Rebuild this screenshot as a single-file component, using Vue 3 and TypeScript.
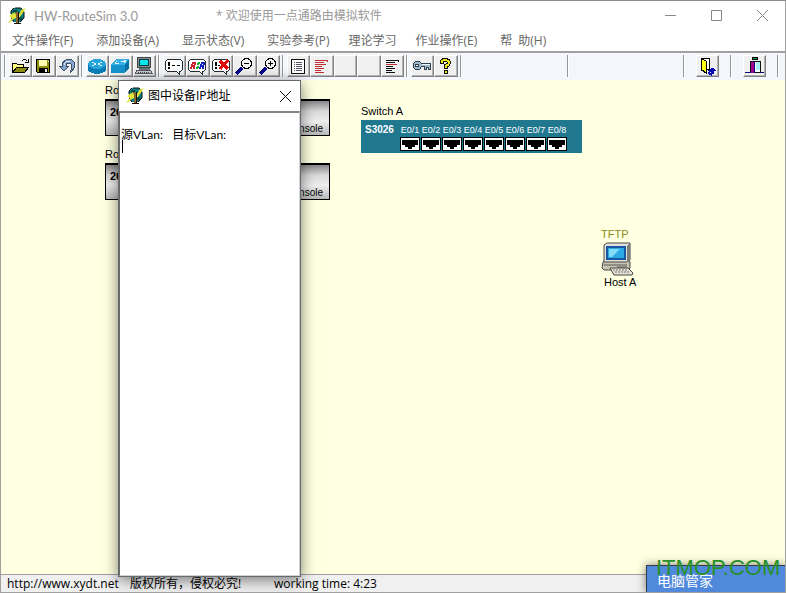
<script setup lang="ts">
import { ref } from 'vue'

interface Tool {
  icon: string
  label: string
}

const menus: string[] = [
  '文件操作(F)',
  '添加设备(A)',
  '显示状态(V)',
  '实验参考(P)',
  '理论学习',
  '作业操作(E)',
  '帮\u2002助(H)',
]

const groups: Tool[][] = [
  [
    { icon: 'open', label: '打开' },
    { icon: 'save', label: '保存' },
    { icon: 'undo', label: '撤销' },
  ],
  [
    { icon: 'router', label: '路由器' },
    { icon: 'switch', label: '交换机' },
    { icon: 'host', label: '主机' },
  ],
  [
    { icon: 'note', label: '标注' },
    { icon: 'note-color', label: '颜色标注' },
    { icon: 'note-delete', label: '删除标注' },
    { icon: 'zoom-out', label: '缩小' },
    { icon: 'zoom-in', label: '放大' },
  ],
  [
    { icon: 'list', label: '列表' },
    { icon: 'lines-red', label: '红色配置' },
    { icon: 'blank', label: '备用一' },
    { icon: 'blank', label: '备用二' },
    { icon: 'lines-black', label: '配置' },
  ],
  [
    { icon: 'key', label: '密码' },
    { icon: 'help', label: '帮助' },
  ],
]

const routers: string[] = ['Router A', 'Router B']
const ports: string[] = ['E0/1', 'E0/2', 'E0/3', 'E0/4', 'E0/5', 'E0/6', 'E0/7', 'E0/8']
const addresses = ref('\n源VLan:   目标VLan:\n')
</script>

<template>
  <div class="window">
    <svg class="sprites" aria-hidden="true">
      <symbol id="icon-globe" viewBox="0 0 18 18">
        <path d="M5 1h8l3 3v7l-3 4H6l-3-4V4z" fill="#0a8080" />
        <path d="M5 3h4v3H5zM11 10h3v3h-3z" fill="#064848" />
        <path d="M6 1L3 4v3M3 11l3 4M12 15l4-4V5l-3-4H7" fill="none" stroke="#111" />
        <path d="M0 16l4-5-3-2 6-4 1 3 4-2 1-3 5-2-4 6-3 4H8l-4 2-1 2z" fill="#e3e33a" />
        <path d="M8 5h2v11H8z" fill="#8a662c" />
        <path d="M10 5h1v11h-1zM6 16h7v1H6z" fill="#181000" />
      </symbol>
      <symbol id="open" viewBox="0 0 20 20">
        <path d="M2.500 16.500V7.500h4l1 1h6v3" fill="#ffff80" stroke="#000" />
        <path d="M2.500 16.500l4-5h12l-4 5z" fill="#8c8c10" stroke="#000" />
        <path d="M11.500 5.500l2-2h2l2 2M18.500 3v3.500H15" fill="none" stroke="#000" />
      </symbol>
      <symbol id="save" viewBox="0 0 20 20">
        <path d="M3.500 3.500h13v13h-12l-1-1z" fill="#909010" stroke="#000" />
        <path d="M6 4h8v6H6z" fill="#ffffb0" />
        <path d="M6 12h9v5H6z" fill="#000" />
        <path d="M12 13h2v3h-2zM15 5h1v1h-1z" fill="#f2f2f2" />
      </symbol>
      <symbol id="undo" viewBox="0 0 20 20">
        <path d="M2 10l5 5 5-5H9q0-3 3-3 5 1 1 10 7-7 4-11-3-4-8-2-4 2-4 6z" fill="#83a5cb" stroke="#3f4f67" />
        <path d="M7 9q1-4 6-4" fill="none" stroke="#dcecff" />
      </symbol>
      <symbol id="router" viewBox="0 0 20 20">
        <path d="M1 8v6c1 5 17 5 18 0V8z" fill="#087bb5" />
        <ellipse cx="10" cy="8" rx="9" ry="5" fill="#2aa5dc" />
        <path d="M5 6l4 2-4 2M15 6l-4 2 4 2" fill="none" stroke="#d9f5ff" />
      </symbol>
      <symbol id="switch" viewBox="0 0 20 20">
        <path d="M1 9l5-6h13l-4 6z" fill="#39b1e4" />
        <path d="M1 9h14v8H1z" fill="#1593cc" />
        <path d="M15 9l4-6v9l-4 5z" fill="#0873a8" />
        <path d="M5 7h4M11 5h5M7 5L5 7M14 4l2 1-2 2" stroke="#e0f8ff" fill="none" />
      </symbol>
      <symbol id="host" viewBox="0 0 20 20">
        <path d="M3.500 1.500h13v10h-13z" fill="#829090" stroke="#404848" />
        <path d="M5.500 3.500h9v6h-9z" fill="#05e6ea" stroke="#063c46" />
        <path d="M5 12h11v2H5z" fill="#687474" />
        <path d="M2.500 14.500h14l2 3h-17z" fill="#c8cccc" stroke="#556" />
        <path d="M4 16.500h12" stroke="#444" stroke-dasharray="1 1" />
      </symbol>
      <symbol id="bubble" viewBox="0 0 20 20">
        <path d="M3.500 3.500h13l2 2v8l-2 2h-1v3l-3-3h-9l-2-2v-8z" fill="#fff" stroke="#222c34" />
      </symbol>
      <symbol id="note" viewBox="0 0 20 20">
        <use href="#bubble" />
        <path d="M4 6h2v4H4zM4 11h2v2H4zM8 9h3v1H8zM13 9h3v1h-3z" fill="#000" />
      </symbol>
      <symbol id="note-color" viewBox="0 0 20 20">
        <use href="#bubble" />
        <path d="M4 13l2-7M7 13l1-7" fill="none" stroke="#d02030" stroke-width="2" />
        <path d="M10 13l1-3M12 6l-1 3" stroke="#10b030" stroke-width="2" />
        <path d="M13 13l2-7M16 13l1-7" stroke="#1525c0" stroke-width="2" />
      </symbol>
      <symbol id="note-delete" viewBox="0 0 20 20">
        <use href="#bubble" />
        <path d="M4 6h2v4H4zM4 11h2v2H4zM7 9h2v1H7z" fill="#000" />
        <path d="M9 5l8 8M17 4l-8 9" stroke="#e00b0b" stroke-width="3" />
      </symbol>
      <symbol id="zoom-out" viewBox="0 0 20 20">
        <path d="M8 12l-6 6" stroke="#08088b" stroke-width="3" />
        <circle cx="12.500" cy="7.500" r="5" fill="#f4f4f4" stroke="#000" />
        <path d="M10 7h5v1h-5z" fill="#000" />
      </symbol>
      <symbol id="zoom-in" viewBox="0 0 20 20">
        <path d="M8 12l-6 6" stroke="#08088b" stroke-width="3" />
        <circle cx="12.500" cy="7.500" r="5" fill="#f4f4f4" stroke="#000" />
        <path d="M10 7h5v1h-5zM12 5h1v5h-1z" fill="#000" />
      </symbol>
      <symbol id="list" viewBox="0 0 20 20">
        <path d="M3 3h14v15H3z" fill="#111" />
        <path d="M4 4h12v13H4z" fill="#fff" />
        <path d="M6 6h1v1H6zM8 6h6v1H8zM6 8h1v1H6zM8 8h6v1H8zM6 10h1v1H6zM8 10h6v1H8zM6 12h1v1H6zM8 12h6v1H8zM6 14h1v1H6zM8 14h6v1H8z" fill="#556" />
      </symbol>
      <symbol id="lines-red" viewBox="0 0 20 20">
        <path d="M4 4h13v2h-1V5H4zM4 6h9v1H4zM4 8h11v1H4zM4 10h7v1H4zM4 12h9v1H4zM4 14h6v1H4zM4 16h9v1H4z" fill="#c22b31" />
      </symbol>
      <symbol id="lines-black" viewBox="0 0 20 20">
        <path d="M4 4h13v2h-1V5H4zM4 6h9v1H4zM4 10h7v1H4zM4 12h9v1H4zM4 14h6v1H4zM4 16h9v1H4z" fill="#111" />
        <path d="M4 8h11v1H4z" fill="#c22b31" />
      </symbol>
      <symbol id="blank" viewBox="0 0 20 20" />
      <symbol id="key" viewBox="0 0 20 20">
        <path d="M1.500 7.500l2-2h4l2 2h9v6h-2v-2h-2v2h-2v-3h-3l-2 3h-4l-2-2z" fill="#9eb9cc" stroke="#34424f" />
        <path d="M3.500 8.500h3v2h-3z" fill="#f0f0f0" stroke="#34424f" />
        <path d="M10 8h8v1h-8z" fill="#eef8ff" />
      </symbol>
      <symbol id="help" viewBox="0 0 20 20">
        <path d="M7 8V6q0-2 3-2t4 2q0 3-3 4v3M11 14v4" fill="none" stroke="#111" stroke-width="4" />
        <path d="M7 7V6q0-2 3-2t4 2q0 3-3 4v2M11 15v2" fill="none" stroke="#f0ea17" stroke-width="2" />
      </symbol>
      <symbol id="door" viewBox="0 0 20 20">
        <path d="M4.500 14.500v-12h8v11h-3" fill="#fff" stroke="#000" />
        <path d="M4.500 2.500l5 3v12l-5-4z" fill="#ffff18" stroke="#000" />
        <path d="M13 17h3v-4M11 17l3-3v5zM13 14h5l-2-2z" fill="#080ab4" stroke="#080ab4" />
      </symbol>
      <symbol id="exit" viewBox="0 0 20 20">
        <path d="M8.500 1.500h5v2h-5z" fill="#14a044" stroke="#000" />
        <path d="M6.500 5.500h10v11h-10z" fill="#fff" stroke="#111" />
        <path d="M7 6h3v11H7z" fill="#a00891" />
        <path d="M12 6h4v8h-4z" fill="#a7f0f4" />
        <path d="M10 5h1v12h-1zM1 16h6v1H1zM16 16h4v1h-4z" fill="#070774" />
      </symbol>
      <symbol id="computer" viewBox="0 0 34 34">
        <path d="M2 20l4-3h20l3 3v6l-2 2H3l-2-2z" fill="#c9c5b5" stroke="#4b4a45" />
        <path d="M3 3l3-2h23v17l-3 2H3z" fill="#e2e0d8" stroke="#484848" />
        <path d="M26 4l3-3v17l-3 2z" fill="#7d7d79" />
        <path d="M6 5h18v12H6z" fill="#2da9e6" stroke="#1659a2" stroke-width="2" />
        <path d="M8 7h11l-8 8H8z" fill="#83dcfa" />
        <path d="M3 23h23M16 25h10" stroke="#595853" />
        <path d="M9 26h18l5 5-1 2H13z" fill="#e6e2d8" stroke="#45443f" />
        <path d="M12 28h15M14 30h15" stroke="#77746c" stroke-dasharray="2 1" />
      </symbol>
    </svg>

    <header class="titlebar">
      <svg class="app-icon"><use href="#icon-globe" /></svg>
      <h1 class="name">HW-RouteSim 3.0</h1>
      <p class="welcome">* 欢迎使用一点通路由模拟软件</p>
      <div class="controls">
        <button class="control" aria-label="最小化">
          <svg viewBox="0 0 11 11"><path d="M0 5.500h11" /></svg>
        </button>
        <button class="control" aria-label="最大化">
          <svg viewBox="0 0 11 11"><path d="M.5.5h10v10H.5z" /></svg>
        </button>
        <button class="control" aria-label="关闭">
          <svg viewBox="0 0 11 11"><path d="M0 0l11 11M11 0L0 11" /></svg>
        </button>
      </div>
    </header>

    <nav class="menubar">
      <button v-for="menu in menus" :key="menu" class="menu">{{ menu }}</button>
    </nav>

    <div class="toolbar" role="toolbar">
      <template v-for="(group, g) in groups" :key="g">
        <span class="separator"></span>
        <div class="group">
          <button v-for="tool in group" :key="tool.label" class="tool" :aria-label="tool.label">
            <svg><use :href="'#' + tool.icon" /></svg>
          </button>
        </div>
      </template>
      <span class="separator"></span>
      <span class="separator middle"></span>
      <div class="exits">
        <span class="separator"></span>
        <button class="tool" aria-label="退出"><svg><use href="#door" /></svg></button>
        <span class="separator"></span>
        <button class="tool" aria-label="关闭程序"><svg><use href="#exit" /></svg></button>
        <span class="separator"></span>
      </div>
    </div>

    <main class="canvas">
      <div v-for="(router, r) in routers" :key="router" class="router" :class="r === 0 ? 'first' : 'second'">
        <div class="device-name">{{ router }}</div>
        <div class="router-body">
          <b class="model">2621</b>
          <span class="console">Console</span>
        </div>
      </div>

      <div class="switch">
        <div class="device-name">Switch A</div>
        <div class="switch-body">
          <b class="switch-model">S3026</b>
          <div class="ports">
            <div v-for="port in ports" :key="port" class="port">
              <span>{{ port }}</span>
              <svg viewBox="0 0 20 14">
                <path d="M0 0h20v14H0z" fill="#000" />
                <path d="M1 1h18v12H1z" fill="#fff" />
                <path d="M2 3h16v5h-3v2h-3v2H8v-2H5V8H2z" fill="#000" />
              </svg>
            </div>
          </div>
        </div>
      </div>

      <div class="host">
        <span class="service">TFTP</span>
        <svg><use href="#computer" /></svg>
        <span class="host-name">Host A</span>
      </div>
    </main>

    <footer class="statusbar">
      <span class="site">http://www.xydt.net</span>
      <span class="rights">版权所有，侵权必究!</span>
      <span class="time">working time: 4:23</span>
    </footer>

    <section class="dialog" role="dialog" aria-labelledby="dialog-title">
      <header class="dialog-head">
        <svg class="app-icon"><use href="#icon-globe" /></svg>
        <h2 id="dialog-title">图中设备IP地址</h2>
        <button class="control close" aria-label="关闭窗口">
          <svg viewBox="0 0 11 11"><path d="M0 0l11 11M11 0L0 11" /></svg>
        </button>
      </header>
      <div class="memo">
        <textarea v-model="addresses" aria-labelledby="dialog-title" spellcheck="false"></textarea>
        <span class="caret"></span>
      </div>
    </section>

    <aside class="popup">
      <span class="popup-title">电脑管家</span>
      <span class="brand">ITMOP.COM</span>
    </aside>
  </div>
</template>

<style>
body {
  margin: 0;
}
</style>

<style scoped>
.window {
  position: relative;
  display: flex;
  flex-direction: column;
  box-sizing: border-box;
  height: 100vh;
  overflow: hidden;
  border: 1px solid #a0a0a0;
  border-top-color: #8b8b8b;
  background: #fff;
  color: #000;
  font: 12px/16px "Open Sans", "Noto Sans CJK SC", sans-serif;
}

.sprites {
  position: absolute;
  width: 0;
  height: 0;
}

button {
  margin: 0;
  padding: 0;
  border: 0;
  background: none;
  color: inherit;
  font: inherit;
}

h1,
h2,
p {
  margin: 0;
  font: inherit;
}

.titlebar {
  display: flex;
  align-items: center;
  height: 29px;
  padding-left: 7px;
  color: #999;
}

.app-icon {
  flex: none;
  width: 18px;
  height: 18px;
  margin-right: 8px;
}

.name {
  width: 182px;
  font-family: Lato, sans-serif;
  font-size: 13px;
}

.controls {
  display: flex;
  margin-left: auto;
}

.control {
  display: grid;
  place-items: center;
  width: 46px;
  height: 29px;
}

.control svg {
  width: 11px;
  height: 11px;
  fill: none;
  stroke: #888;
}

.menubar {
  display: flex;
  align-items: center;
  gap: 23px;
  height: 21px;
  padding-left: 11px;
  color: #666;
  white-space: nowrap;
}

.menu:nth-child(5) {
  margin: 0 -4px;
}

.toolbar {
  display: flex;
  align-items: center;
  height: 26px;
  padding: 0 0 1px 1px;
  border-top: 2px solid #a0a0a0;
  background: #f3f6fb;
}

.separator {
  flex: none;
  box-sizing: border-box;
  width: 2px;
  height: 22px;
  margin: 0 3px 0 2px;
  border-left: 1px solid #969696;
  border-right: 1px solid #fff;
}

.separator.middle {
  margin-left: 102px;
}

.group {
  display: flex;
  flex: none;
}

.tool {
  display: grid;
  flex: none;
  place-content: start;
  box-sizing: border-box;
  width: 23px;
  height: 22px;
  border: 1px solid;
  border-color: #fff #808080 #808080 #fff;
  background: #f0f0f0;
  box-shadow: inset -1px -1px #b4b4b4;
}

.group .tool:nth-child(even) {
  width: 24px;
}

.tool svg {
  width: 20px;
  height: 20px;
  shape-rendering: crispEdges;
}

.exits {
  display: flex;
  align-items: center;
  margin-left: auto;
  padding-right: 3px;
}

.exits .tool {
  margin: 0 9px 0 8px;
}

.canvas {
  position: relative;
  flex: 1;
  background: #ffffe1;
  font: 11px/13px "Liberation Sans", sans-serif;
}

.router,
.switch,
.host {
  position: absolute;
}

.router {
  left: 104px;
  width: 225px;
}

.first {
  top: 4px;
}

.second {
  top: 68px;
}

.router-body {
  display: flex;
  justify-content: space-between;
  box-sizing: border-box;
  height: 37px;
  margin-top: 2px;
  padding: 5px 6px 0 4px;
  border: 1px solid #000;
  border-top-width: 2px;
  background: linear-gradient(#888, #d8d8d8 30%, #eee 60%, #b8b8b8);
}

.console {
  align-self: flex-end;
  font-size: 10px;
}

.switch {
  top: 25px;
  left: 360px;
}

.switch-body {
  display: flex;
  gap: 6px;
  box-sizing: border-box;
  width: 221px;
  height: 33px;
  margin-top: 2px;
  padding: 4px;
  background: #20788f;
  color: #fff;
}

.switch-model {
  width: 29px;
  font-size: 10px;
  line-height: 11px;
}

.ports {
  display: flex;
  gap: 1px;
}

.port {
  display: flex;
  flex-direction: column;
  align-items: center;
  width: 20px;
  font-size: 9px;
}

.port svg {
  flex: none;
  width: 20px;
  height: 14px;
}

.host {
  top: 148px;
  left: 600px;
  display: flex;
  flex-direction: column;
  width: 38px;
}

.host svg {
  width: 34px;
  height: 34px;
  margin-top: 1px;
}

.service {
  color: #8b8b20;
}

.host-name {
  padding-left: 3px;
  white-space: nowrap;
}

.statusbar {
  display: flex;
  align-items: center;
  height: 17px;
  padding-left: 6px;
  border-top: 1px solid #a0a0a0;
  background: #f0f0f0;
  white-space: nowrap;
}

.site {
  width: 123px;
}

.rights {
  width: 144px;
}

.dialog {
  position: absolute;
  top: 79px;
  bottom: 15px;
  left: 117px;
  display: flex;
  flex-direction: column;
  box-sizing: border-box;
  width: 183px;
  border: 1px solid #666b70;
  background: #fff;
  box-shadow: 0 3px 14px rgba(0, 0, 0, 0.5);
}

.dialog-head {
  display: flex;
  align-items: center;
  height: 30px;
  padding-left: 7px;
}

.dialog-head .app-icon {
  margin-right: 4px;
}

.close {
  width: 30px;
  margin-left: auto;
}

.close svg {
  stroke: #111;
}

.memo {
  position: relative;
  display: flex;
  flex: 1;
  border: 1px solid #d4d4d4;
  border-top: 2px solid #858585;
  border-left-color: #696969;
}

textarea {
  flex: 1;
  min-width: 0;
  margin: 0;
  padding: 2px 1px;
  border: 0;
  outline: 0;
  resize: none;
  background: #fff;
  color: #000;
  font: 12px/13px Lato, "Noto Sans CJK SC", sans-serif;
}

.caret {
  position: absolute;
  top: 27px;
  left: 2px;
  width: 1px;
  height: 13px;
  background: #000;
}

.popup {
  position: absolute;
  right: -1px;
  bottom: -1px;
  box-sizing: border-box;
  width: 140px;
  height: 28px;
  padding: 7px 10px;
  border: 1px solid #333b46;
  border-width: 1px 0 0 1px;
  background: #5089dc;
  box-shadow: 0 0 10px rgba(0, 0, 0, 0.5);
  color: #fff;
  font-size: 14px;
}

.brand {
  position: absolute;
  top: -10px;
  left: 9px;
  color: #269126;
  font: 22px/24px "Liberation Sans", sans-serif;
}
</style>
